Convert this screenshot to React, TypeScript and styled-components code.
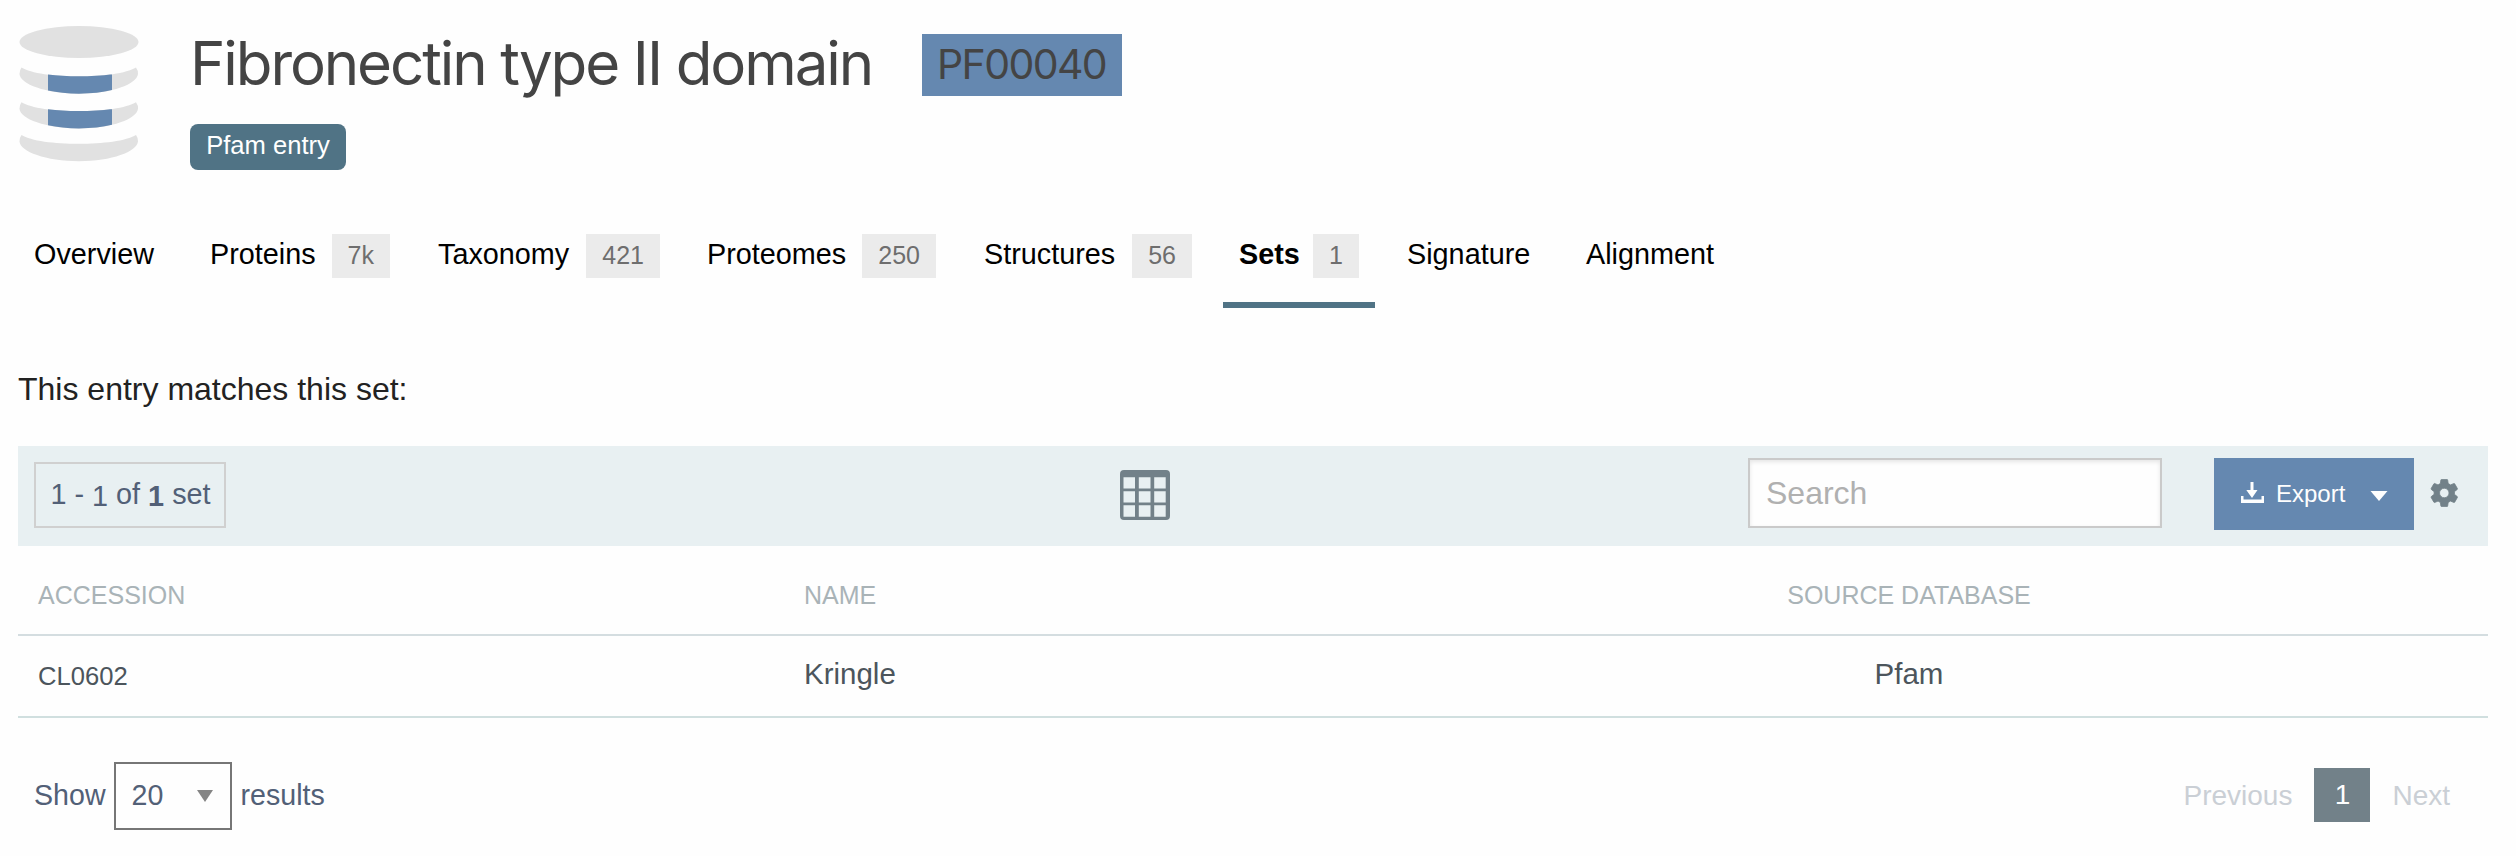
import React from "react";
import styled, { createGlobalStyle } from "styled-components";

const Global = createGlobalStyle`
  * { box-sizing: border-box; }
  body { margin: 0; background: #fefefe; font-family: "Liberation Sans", Arial, sans-serif; }
`;

const Page = styled.main`
  display: flex;
  flex-direction: column;
  height: 856px;
  padding: 0 28px 0 18px;
  overflow: hidden;
`;
const Header = styled.header`
  display: flex;
  height: 203px;
`;
const Logo = styled.svg`
  flex: none;
  width: 122px;
  height: 170px;
  margin-right: 50px;
`;
const Heading = styled.div`
  display: flex;
  flex-direction: column;
  align-items: flex-start;
`;
const TitleRow = styled.div`
  display: flex;
  align-items: center;
  height: 62px;
  margin-top: 34px;
`;
const Title = styled.h1`
  margin: 0;
  width: 732px;
  padding-bottom: 4px;
  font: 400 60px/58px Inter, sans-serif;
  letter-spacing: -2.1px;
  white-space: nowrap;
  color: #444;
`;
const Accession = styled.span`
  width: 200px;
  height: 62px;
  padding-left: 15px;
  font: 400 41px/60px Inter, sans-serif;
  letter-spacing: -1.6px;
  background: #6588b0;
  color: #444;
`;
const Tag = styled.span`
  height: 46px;
  width: 156px;
  margin-top: 28px;
  border-radius: 8px;
  background: #507385;
  color: #fff;
  font-size: 25.6px;
  line-height: 43px;
  text-align: center;
`;

const Tabs = styled.nav`
  display: flex;
  height: 105px;
`;
const Tab = styled.a<{ $width: number; $active?: boolean }>`
  display: flex;
  align-items: flex-start;
  width: ${(p) => p.$width}px;
  padding: 31px 16px 0;
  justify-content: space-between;
  border-bottom: 6px solid ${(p) => (p.$active ? "#507385" : "transparent")};
  color: #000;
  font-size: 28.8px;
  font-weight: ${(p) => (p.$active ? 700 : 400)};
  line-height: 40px;
  white-space: nowrap;
`;
const Count = styled.span`
  height: 44px;
  padding: 0 16px;
  background: #ebebeb;
  color: #6e6e6e;
  font-size: 25px;
  font-weight: 400;
  line-height: 43px;
`;
const Gap = styled.span<{ $width: number }>`
  flex: none;
  width: ${(p) => p.$width}px;
`;

const Intro = styled.p`
  margin: 62px 0 0;
  height: 76px;
  font-size: 32px;
  line-height: 38px;
  color: #222;
`;

const Toolbar = styled.div`
  display: flex;
  align-items: flex-start;
  height: 100px;
  background: #e8f0f2;
  color: #526077;
`;
const Range = styled.div`
  width: 192px;
  height: 66px;
  margin: 16px 0 0 16px;
  padding-left: 1px;
  border: 2px solid #d0d0d0;
  font-size: 28.8px;
  line-height: 61px;
  text-align: center;
`;
const Lowered = styled.span`
  display: inline-block;
  transform: translateY(2px);
`;
const GridIcon = styled.svg`
  width: 50px;
  height: 50px;
  margin: 24px 0 0 894px;
`;
const Search = styled.input`
  width: 414px;
  height: 70px;
  margin: 12px 0 0 578px;
  padding: 0 16px;
  border: 2px solid #cacaca;
  border-radius: 0;
  background: #fefefe;
  box-shadow: inset 0 2px 4px rgba(10, 10, 10, 0.1);
  font: 32px "Liberation Sans", Arial, sans-serif;
  &::placeholder { color: #b0b0b0; opacity: 1; }
`;
const Export = styled.button`
  display: flex;
  align-items: center;
  width: 200px;
  height: 72px;
  margin: 12px 0 0 52px;
  padding: 0 26px 0 26px;
  border: 0;
  background: #6588b0;
  color: #fefefe;
  font: 24px "Liberation Sans", Arial, sans-serif;
`;
const DownloadIcon = styled.svg`
  width: 24px;
  height: 24px;
  margin-right: 12px;
`;
const Caret = styled.svg`
  width: 18px;
  height: 10px;
  margin: 4px 0 0 auto;
`;
const Gear = styled.svg`
  width: 28px;
  height: 28px;
  margin: 33px 0 0 16px;
`;

const Row = styled.div<{ $head?: boolean }>`
  display: grid;
  grid-template-columns: 766px 897px 1fr;
  height: ${(p) => (p.$head ? 90 : 82)}px;
  padding-left: 20px;
  border-bottom: 2px solid ${(p) => (p.$head ? "#d4dde0" : "#d0dfdf")};
  line-height: ${(p) => (p.$head ? 99 : 76)}px;
  font-size: ${(p) => (p.$head ? 25 : 29.5)}px;
  color: ${(p) => (p.$head ? "#a9b3b7" : "#4c555c")};
`;
const Small = styled.span`
  padding-top: 2px;
  font-size: 25.6px;
`;
const Source = styled.span`
  width: 416px;
  text-align: center;
`;

const Footer = styled.footer`
  display: flex;
  align-items: flex-start;
  margin-top: 44px;
  padding: 0 16px;
  font-size: 28.6px;
  line-height: 66px;
  color: #526077;
`;
const Select = styled.span`
  display: flex;
  align-items: center;
  justify-content: space-between;
  width: 118px;
  height: 68px;
  margin: 0 9px 0 8px;
  padding: 0 17px 0 16px;
  border: 2px solid #767676;
`;
const Value = styled.span`
  padding-bottom: 3px;
  line-height: 60px;
`;
const Pager = styled.div`
  display: flex;
  align-items: center;
  margin: 6px 22px 0 auto;
  font-size: 28px;
  line-height: 53px;
  color: #cacfd5;
`;
const Current = styled.span`
  width: 56px;
  height: 54px;
  margin: 0 22px;
  background: #728189;
  color: #fefefe;
  text-align: center;
`;

const tabs = [
  { label: "Overview", width: 152, gap: 24 },
  { label: "Proteins", count: "7k", width: 212, gap: 16 },
  { label: "Taxonomy", count: "421", width: 254, gap: 15 },
  { label: "Proteomes", count: "250", width: 261, gap: 16 },
  { label: "Structures", count: "56", width: 240, gap: 15 },
  { label: "Sets", count: "1", width: 152, gap: 16, active: true },
  { label: "Signature", width: 155, gap: 24 },
  { label: "Alignment", width: 160, gap: 0 },
];

export default function App() {
  return (
    <Page>
      <Global />
      <Header>
        <Logo viewBox="18 0 122 170">
          <defs>
            <clipPath id="band">
              <path d="M48 60H112V170H48Z" />
            </clipPath>
          </defs>
          <ellipse cx="79" cy="42" rx="59.500" ry="16" fill="#e1e1e1" />
          {[0, 34.7, 67.5].map((y, i) => {
            const d = `M21.500 ${67.500 + y}C40 ${79.300 + y} 117 ${79.300 + y} 136 ${67.500 + y}Q138.500 ${71 + y} 138 ${74 + y}C137 ${84 + y} 112 ${93.700 + y} 79 ${93.700 + y}C46 ${93.700 + y} 20 ${84 + y} 19.500 ${74 + y}Q19.500 ${70 + y} 21.500 ${67.500 + y}Z`;
            return (
              <g key={y}>
                <path d={d} fill="#e1e1e1" />
                {i < 2 && <path d={d} fill="#6588b0" clipPath="url(#band)" />}
              </g>
            );
          })}
        </Logo>
        <Heading>
          <TitleRow>
            <Title>Fibronectin type II domain</Title>
            <Accession>PF00040</Accession>
          </TitleRow>
          <Tag>Pfam entry</Tag>
        </Heading>
      </Header>
      <Tabs>
        {tabs.map((t) => (
          <React.Fragment key={t.label}>
            <Tab $width={t.width} $active={t.active}>
              {t.label}
              {t.count && <Count>{t.count}</Count>}
            </Tab>
            <Gap $width={t.gap} />
          </React.Fragment>
        ))}
      </Tabs>
      <Intro>This entry matches this set:</Intro>
      <Toolbar>
        <Range>
          1 - <Lowered>1</Lowered> of <Lowered as="b">1</Lowered> set
        </Range>
        <GridIcon viewBox="0 0 50 50">
          <path
            fill="#728189"
            fillRule="evenodd"
            d="M4 0H46Q50 0 50 4V46Q50 50 46 50H4Q0 50 0 46V4Q0 0 4 0ZM3.500 7.300V18.500H15V7.300ZM18.800 7.300V18.500H30.500V7.300ZM34.200 7.300V18.500H45.700V7.300ZM3.500 21.300V32.500H15V21.300ZM18.800 21.300V32.500H30.500V21.300ZM34.200 21.300V32.500H45.700V21.300ZM3.500 35.300V46.700H15V35.300ZM18.800 35.300V46.700H30.500V35.300ZM34.200 35.300V46.700H45.700V35.300Z"
          />
        </GridIcon>
        <Search placeholder="Search" />
        <Export>
          <DownloadIcon viewBox="0 0 24 24" fill="#fefefe">
            <path d="M10.500 0H13.500V8H17.500L12 16L6.300 8H10.500ZM1 14H3.500V17.500H21.500V14H24V21H1Z" />
          </DownloadIcon>
          Export
          <Caret viewBox="0 0 18 10">
            <path d="M0.500 0H17.500L9 10Z" fill="#fefefe" />
          </Caret>
        </Export>
        <Gear viewBox="1.500 1.700 20.600 20.600">
          <path
            fill="#728189"
            stroke="#728189"
            strokeWidth="0.600"
            d="M19.430 12.980c.04-.32.07-.64.07-.98s-.03-.66-.07-.98l2.110-1.650c.19-.15.24-.42.12-.64l-2-3.460c-.12-.22-.39-.3-.61-.22l-2.490 1c-.52-.4-1.080-.73-1.690-.98l-.38-2.650C14.460 2.180 14.250 2 14 2h-4c-.25 0-.46.18-.49.42l-.38 2.650c-.61.25-1.170.59-1.690.98l-2.490-1c-.23-.09-.49 0-.61.22l-2 3.460c-.13.22-.07.49.12.64l2.110 1.650c-.04.32-.07.65-.07.98s.03.66.07.98l-2.110 1.650c-.19.15-.24.42-.12.64l2 3.460c.12.22.39.3.61.22l2.490-1c.52.4 1.080.73 1.690.98l.38 2.650c.03.24.24.42.49.42h4c.25 0 .46-.18.49-.42l.38-2.650c.61-.25 1.170-.59 1.690-.98l2.490 1c.23.09.49 0 .61-.22l2-3.460c.12-.22.07-.49-.12-.64l-2.110-1.650zM12 15.500c-1.930 0-3.500-1.570-3.500-3.500s1.570-3.500 3.500-3.500 3.500 1.570 3.500 3.500-1.570 3.500-3.500 3.500z"
          />
        </Gear>
      </Toolbar>
      <Row $head>
        <span>ACCESSION</span>
        <span>NAME</span>
        <Source>SOURCE DATABASE</Source>
      </Row>
      <Row>
        <Small>CL0602</Small>
        <span>Kringle</span>
        <Source>Pfam</Source>
      </Row>
      <Footer>
        Show
        <Select>
          <Value>20</Value>
          <svg width="16" height="12" viewBox="0 0 16 12">
            <path d="M0 0H16L8 12Z" fill="#858585" />
          </svg>
        </Select>
        results
        <Pager>
          Previous<Current>1</Current>Next
        </Pager>
      </Footer>
    </Page>
  );
}
